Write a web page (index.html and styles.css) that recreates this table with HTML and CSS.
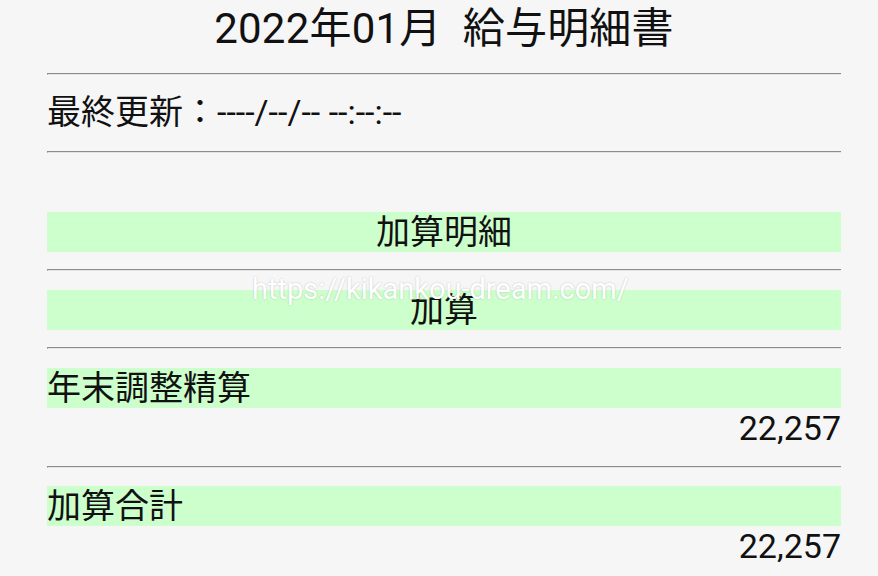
FILE: index.html
```html
<!DOCTYPE html>
<html lang="ja">
<head>
<meta charset="utf-8">
<title>給与明細書</title>
<link rel="stylesheet" href="styles.css">
</head>
<body>
<div class="page">
  <h1 class="title">2022年01月&nbsp; 給与明細書</h1>
  <hr class="rule rule-top">
  <p class="updated">最終更新：----/--/-- --:--:--</p>
  <hr class="rule rule-updated">
  <div class="band band-center band-first">加算明細</div>
  <hr class="rule rule-band">
  <div class="band band-center">加算</div>
  <hr class="rule rule-band">
  <div class="band">年末調整精算</div>
  <div class="value">22,257</div>
  <hr class="rule rule-value">
  <div class="band">加算合計</div>
  <div class="value">22,257</div>
  <div class="watermark">https://kikankou-dream.com/</div>
</div>
</body>
</html>
```
FILE: styles.css
```css
html, body {
  margin: 0;
  padding: 0;
  background: #f6f6f6;
}
body {
  font-family: Roboto, "Noto Sans CJK JP", sans-serif;
  color: #111;
  height: 576px;
  overflow: hidden;
}
.page {
  position: relative;
  width: 794px;
  padding: 0 37px 0 47px;
}
.title {
  margin: 0;
  height: 58px;
  line-height: 58px;
  font-size: 42px;
  font-weight: 400;
  text-align: center;
  white-space: pre;
  letter-spacing: 0.2px;
}
.rule {
  display: block;
  margin: 0;
  height: 0;
  border: none;
  border-top: 1px solid #8c8c8c;
  border-bottom: 1px solid #e4e4e4;
  border-left: 1px solid #8c8c8c;
}
.rule-top { margin-top: 15px; }
.rule-updated { margin-top: 19px; }
.rule-band { margin-top: 17px; margin-bottom: 19px; }
.rule-value { margin-top: 18px; margin-bottom: 18px; }
.updated {
  margin: 17px 0 0;
  font-size: 34px;
  line-height: 40px;
  white-space: nowrap;
}
.band {
  background: #ccffcc;
  height: 40px;
  line-height: 40px;
  font-size: 34px;
  white-space: nowrap;
}
.band-first { margin-top: 59px; }
.band-center { text-align: center; }
.value {
  height: 40px;
  line-height: 40px;
  font-size: 34px;
  text-align: right;
}
.watermark {
  position: absolute;
  left: 252px;
  top: 273px;
  font-family: Roboto, sans-serif;
  font-size: 29px;
  line-height: 32px;
  color: #ffffff;
  text-shadow: 0 0 2px rgba(0, 0, 0, 0.22);
  white-space: nowrap;
}
```
